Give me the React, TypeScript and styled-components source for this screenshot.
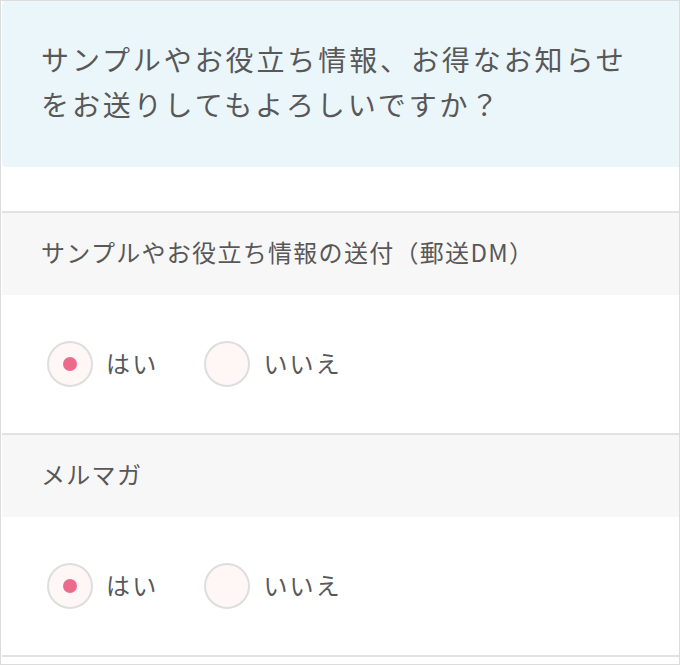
import styled, { createGlobalStyle } from "styled-components";
import { useState } from "react";

const GlobalStyle = createGlobalStyle`
  * {
    box-sizing: border-box;
  }
  html,
  body {
    margin: 0;
    padding: 0;
    background: #fff;
  }
  body {
    font-family: "Noto Sans CJK JP", "Noto Sans", sans-serif;
    color: #585858;
  }
`;

type Question = {
  id: string;
  label: string;
};

const questions: Question[] = [
  { id: "dm", label: "サンプルやお役立ち情報の送付（郵送DM）" },
  { id: "mail", label: "メルマガ" },
];

const options = [
  { value: "yes", label: "はい" },
  { value: "no", label: "いいえ" },
];

const App: React.FC = () => {
  const [answers, setAnswers] = useState<Record<string, string>>({
    dm: "yes",
    mail: "yes",
  });

  const selectHandler = (id: string, value: string) => {
    setAnswers((prev) => ({ ...prev, [id]: value }));
  };

  return (
    <>
      <GlobalStyle />
      <Frame>
        <Intro>
          <IntroText>
            サンプルやお役立ち情報、お得なお知らせをお送りしてもよろしいですか？
          </IntroText>
        </Intro>
        <Sections>
          {questions.map((q) => (
            <Section key={q.id}>
              <SectionHeader>{q.label}</SectionHeader>
              <OptionsRow>
                {options.map((opt) => {
                  const checked = answers[q.id] === opt.value;
                  return (
                    <Option
                      key={opt.value}
                      onClick={() => selectHandler(q.id, opt.value)}
                    >
                      <RadioCircle>{checked ? <RadioDot /> : null}</RadioCircle>
                      <OptionLabel>{opt.label}</OptionLabel>
                    </Option>
                  );
                })}
              </OptionsRow>
            </Section>
          ))}
        </Sections>
      </Frame>
    </>
  );
};

export default App;

const Frame = styled.div`
  width: 680px;
  height: 665px;
  border: 1px solid #dcdcdc;
  padding: 0 0 0 1px;
  display: flex;
  flex-direction: column;
  overflow: hidden;
`;

const Intro = styled.div`
  background-color: #ebf6fb;
  border-radius: 4px 0 0 4px;
  padding: 36px 40px 40px 39px;
  height: 166px;
`;

const IntroText = styled.p`
  margin: 0;
  font-size: 28px;
  line-height: 45px;
  letter-spacing: 2.9px;
  color: #585858;
`;

const Sections = styled.div`
  margin-top: 44px;
  display: flex;
  flex-direction: column;
`;

const Section = styled.div`
  border-top: 2px solid #e2e2e2;
  &:last-child {
    border-bottom: 2px solid #e2e2e2;
  }
`;

const SectionHeader = styled.div`
  background-color: #f7f7f7;
  height: 82px;
  padding: 0 40px 5px 39px;
  display: flex;
  align-items: center;
  font-size: 24px;
  line-height: 1;
  letter-spacing: 1.3px;
  color: #585858;
`;

const OptionsRow = styled.div`
  height: 138px;
  padding: 0 0 0 45px;
  display: flex;
  align-items: center;
  gap: 46px;
`;

const Option = styled.label`
  display: flex;
  align-items: center;
  gap: 13px;
  cursor: pointer;
`;

const RadioCircle = styled.span`
  width: 46px;
  height: 46px;
  border-radius: 50%;
  border: 2px solid #dedede;
  background-color: #fff6f6;
  display: flex;
  align-items: center;
  justify-content: center;
`;

const RadioDot = styled.span`
  width: 14px;
  height: 14px;
  border-radius: 50%;
  background-color: #ec6b8c;
`;

const OptionLabel = styled.span`
  font-size: 24px;
  letter-spacing: 2.2px;
  color: #585858;
  margin-top: -4px;
`;
